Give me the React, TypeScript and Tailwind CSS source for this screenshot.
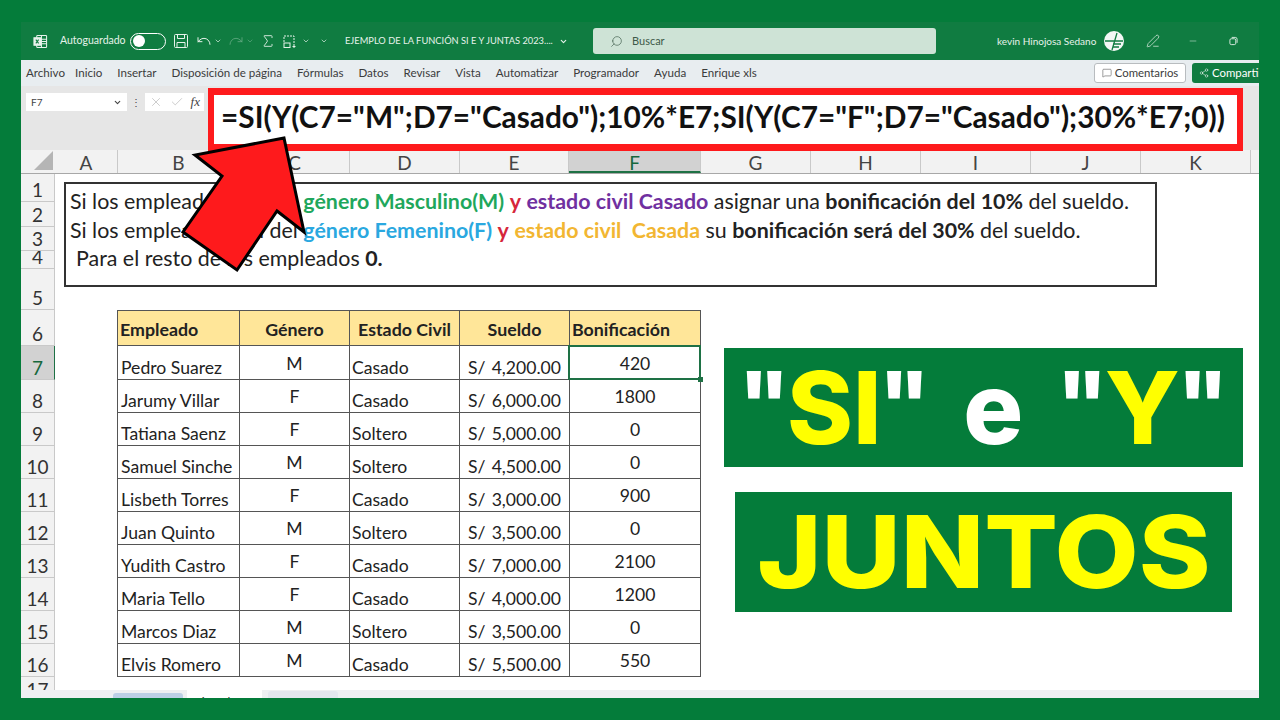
import { ChevronDown, MessageSquare, Minus, PenLine, Search, Share2, Sigma, Redo, Undo, X, Check } from "lucide-react";

const columns = [
  { label: "A", w: "w-[63px]" },
  { label: "B", w: "w-[122px]" },
  { label: "C", w: "w-[110px]" },
  { label: "D", w: "w-[110px]" },
  { label: "E", w: "w-[109px]" },
  { label: "F", w: "w-[132px]", active: true },
  { label: "G", w: "w-[110px]" },
  { label: "H", w: "w-[110px]" },
  { label: "I", w: "w-[110px]" },
  { label: "J", w: "w-[110px]" },
  { label: "K", w: "w-[110px]" },
];

const tabs = ["Inicio", "Insertar", "Disposición de página", "Fórmulas", "Datos", "Revisar", "Vista", "Automatizar", "Programador", "Ayuda", "Enrique xls"];

const empleados = [
  ["Pedro Suarez", "M", "Casado", "4,200.00", "420"],
  ["Jarumy Villar", "F", "Casado", "6,000.00", "1800"],
  ["Tatiana Saenz", "F", "Soltero", "5,000.00", "0"],
  ["Samuel Sinche", "M", "Soltero", "4,500.00", "0"],
  ["Lisbeth Torres", "F", "Casado", "3,000.00", "900"],
  ["Juan Quinto", "M", "Soltero", "3,500.00", "0"],
  ["Yudith Castro", "F", "Casado", "7,000.00", "2100"],
  ["Maria Tello", "F", "Casado", "4,000.00", "1200"],
  ["Marcos Diaz", "M", "Soltero", "3,500.00", "0"],
  ["Elvis Romero", "M", "Casado", "5,500.00", "550"],
];

const font = "font-['Lato','Open_Sans',sans-serif]";

function RowNumber({ n, h, active }: { n: number; h: string; active?: boolean }) {
  return (
    <div className={`${h} w-[34px] shrink-0 flex items-end justify-center overflow-hidden border-b border-r border-[#c9c9c9] pb-[2px] text-[19px] leading-none ${active ? "bg-[#d2d2d2] text-[#16683c] border-r-[#1e7145]" : "bg-[#f2f2f2] text-[#333]"}`}>
      {n}
    </div>
  );
}

function Arrow() {
  return (
    <svg className="absolute left-[160px] top-[112px]" width="130" height="142" viewBox="0 0 130 142">
      <path d="M103 4 L14 21 L41 42 L2 98 L56 136 L96 77 L123 98 Z" fill="#fe1a1c" stroke="#000" strokeWidth="3" strokeLinejoin="miter" />
    </svg>
  );
}

function ExcelLogo() {
  return (
    <svg width="15" height="15" viewBox="0 0 16 16" fill="none" stroke="#e8f2ec" strokeWidth="1.1">
      <rect x="4" y="1.5" width="10.5" height="13" rx="0.8" />
      <path d="M9 1.5v13M9 5.5h5.5M9 8h5.5M9 10.5h5.5" />
      <rect x="1" y="4" width="7" height="8" fill="#e8f2ec" />
      <path d="M3 6l3 4M6 6l-3 4" stroke="#107c41" />
    </svg>
  );
}

function SaveIcon() {
  return (
    <svg width="14" height="14" viewBox="0 0 14 14" fill="none" stroke="#e6f2ea" strokeWidth="1" className="ml-[8px]">
      <rect x="0.5" y="0.5" width="13" height="13" rx="1" />
      <path d="M3.5 0.5v4h7v-4M3 13.5v-5h8v5" />
    </svg>
  );
}

function Quote() {
  return <span className="-mx-[3px] inline-block -translate-y-[5px] text-[88px] text-white">"</span>;
}

export default function App() {
  return (
    <div className={`h-[720px] w-[1280px] overflow-hidden bg-[#047c3a] pl-[21px] pr-[21px] pt-[22px] ${font}`}>
      <div className="relative flex h-[676px] w-[1238px] flex-col overflow-hidden bg-white">
        {/* title bar */}
        <div className="flex h-[38px] shrink-0 items-center bg-[#107c41] text-[#e6f2ea]">
          <div className="ml-[12px]"><ExcelLogo /></div>
          <span className="ml-[12px] w-[65px] whitespace-nowrap text-[10.5px]">Autoguardado</span>
          <div className="ml-[5px] flex h-[17px] w-[36px] items-center rounded-full border border-white px-[2px]">
            <div className="h-[12px] w-[12px] rounded-full bg-white" />
          </div>
          <SaveIcon />
          <Undo size={16} strokeWidth={1.5} className="ml-[8px]" />
          <ChevronDown size={8} className="ml-[2px]" />
          <Redo size={16} strokeWidth={1.2} className="ml-[6px] opacity-40" />
          <ChevronDown size={8} className="ml-[2px] opacity-40" />
          <Sigma size={16} strokeWidth={1.3} className="ml-[6px]" />
          <svg width="15" height="15" viewBox="0 0 15 15" fill="none" stroke="#e6f2ea" strokeWidth="1" className="ml-[6px]">
            <path d="M2 8V2h10v9" strokeDasharray="2 1" />
            <rect x="2" y="9" width="6" height="4.5" />
            <path d="M12 11v3M10.5 12.5h3" />
          </svg>
          <ChevronDown size={8} className="ml-[5px]" />
          <ChevronDown size={8} className="ml-[10px]" />
          <span className="ml-[17px] w-[212px] whitespace-nowrap text-[9.3px]">EJEMPLO DE LA FUNCIÓN SI E Y JUNTAS 2023....</span>
          <ChevronDown size={9} strokeWidth={3} className="ml-[2px]" />
          <div className="ml-[25px] flex h-[26px] w-[343px] shrink-0 items-center rounded-[3px] bg-[#cee3d6] pl-[17px] text-[#3d5a49]">
            <Search size={13} strokeWidth={1.2} className="-scale-x-100" />
            <span className="ml-[9px] text-[11px]">Buscar</span>
          </div>
          <span className="ml-[61px] w-[101px] whitespace-nowrap text-[10px]">kevin Hinojosa Sedano</span>
          <svg width="20" height="20" viewBox="0 0 20 20" className="ml-[6px] shrink-0">
            <circle cx="10" cy="10" r="10" fill="#f3f7f5" />
            <path d="M1 10h18M13 2L8 19M9 13h8M9 16h6" stroke="#107c41" strokeWidth="1.3" />
          </svg>
          <PenLine size={14} strokeWidth={1.2} className="ml-[22px] shrink-0" />
          <Minus size={10} strokeWidth={1.2} className="ml-[28px] shrink-0" />
          <svg width="9" height="10" viewBox="0 0 10 10" fill="none" stroke="#e6f2ea" className="ml-[31px] shrink-0">
            <rect x="1" y="2.5" width="6.5" height="6.5" rx="1.5" />
            <path d="M3 1h4a2 2 0 0 1 2 2v4" />
          </svg>
        </div>

        {/* ribbon tabs */}
        <div className="flex h-[26px] shrink-0 items-center bg-[#e8edf0] pl-[5px] text-[11.6px] text-[#3c3c3c]">
          <span className="w-[49px]">Archivo</span>
          <div className="flex gap-[15px] whitespace-nowrap">
            {tabs.map((t) => (
              <span key={t}>{t}</span>
            ))}
          </div>
          <div className="ml-auto flex items-center gap-[6px] whitespace-nowrap">
            <div className="flex h-[20px] w-[92px] items-center justify-center gap-[3px] rounded-[3px] border border-[#b8bcbf] bg-white text-[11.4px]">
              <MessageSquare size={10} strokeWidth={1.2} />
              Comentarios
            </div>
            <div className="flex h-[20px] w-[67px] items-center gap-[3px] overflow-hidden rounded-l-[3px] bg-[#107c41] pl-[7px] text-[11.4px] text-white">
              <Share2 size={10} strokeWidth={1.2} className="shrink-0" />
              Compartir
            </div>
          </div>
        </div>

        {/* formula bar */}
        <div className="flex h-[64px] shrink-0 items-start bg-[#e6e6e6] pl-[5px] pt-[7px] text-[#444]">
          <div className="flex h-[18px] w-[101px] items-center justify-between bg-white px-[5px] text-[10px]">
            F7
            <ChevronDown size={9} strokeWidth={3} />
          </div>
          <span className="ml-[4px] text-[10px] leading-[18px]">⋮</span>
          <div className="ml-[4px] flex h-[18px] w-[59px] items-center justify-between bg-white px-[4px] text-[#a8a8a8]">
            <X size={14} strokeWidth={1} />
            <Check size={14} strokeWidth={1} />
            <span className="font-['Liberation_Serif',serif] text-[13px] italic text-[#444]">fx</span>
          </div>
        </div>

        {/* column headers */}
        <div className="flex h-[24px] shrink-0 border-b border-[#a8a8a8] bg-[#f2f2f2] text-[19px] leading-[25px] text-[#444]">
          <div className="flex h-full w-[34px] shrink-0 items-end justify-end bg-[#f2f2f2] pb-[3px] pr-[2px]">
            <div className="h-0 w-0 border-b-[19px] border-l-[19px] border-b-[#b5b5b5] border-l-transparent" />
          </div>
          {columns.map((c) => (
            <div key={c.label} className={`${c.w} shrink-0 border-r border-[#c9c9c9] text-center ${c.active ? "border-b-2 border-b-[#1e7145] bg-[#d2d2d2] text-[#16683c]" : ""}`}>
              {c.label}
            </div>
          ))}
        </div>

        {/* sheet */}
        <div className="flex flex-col text-[#222]">
          <div className="flex"><RowNumber n={1} h="h-[28px]" /></div>
          <div className="flex"><RowNumber n={2} h="h-[25px]" /></div>
          <div className="flex"><RowNumber n={3} h="h-[24px]" /></div>
          <div className="flex"><RowNumber n={4} h="h-[18px]" /></div>
          <div className="flex"><RowNumber n={5} h="h-[41px]" /></div>
          <div className="flex">
            <RowNumber n={6} h="h-[36px]" />
            <div className="ml-[62px] flex h-[36px] border-x border-t border-b border-[#555] bg-[#ffe699] text-[17.8px] font-bold leading-[36px] text-[#222]">
              <div className="w-[121px] pl-[2px]">Empleado</div>
              <div className="w-[110px] border-l border-[#555] text-center">Género</div>
              <div className="w-[110px] border-l border-[#555] text-center">Estado Civil</div>
              <div className="w-[110px] border-l border-[#555] text-center">Sueldo</div>
              <div className="w-[131px] border-l border-[#555] pl-[2px]">Bonificación</div>
            </div>
          </div>
          {empleados.map((e, i) => (
            <div key={e[0]} className="flex">
              <RowNumber n={i + 7} h={i === 0 ? "h-[34px]" : "h-[33px]"} active={i === 0} />
              <div className={`ml-[62px] flex border-x border-b border-[#555] text-[17.6px] leading-[22px] ${i === 0 ? "h-[34px]" : "h-[33px]"}`}>
                <div className="flex w-[121px] items-end pl-[3px]">{e[0]}</div>
                <div className="flex w-[110px] items-end justify-center border-l border-[#555] pb-[4px]">{e[1]}</div>
                <div className="flex w-[110px] items-end border-l border-[#555] pl-[2px]">{e[2]}</div>
                <div className="flex w-[110px] items-end justify-between border-l border-[#555] pl-[8px] pr-[8px]">
                  <span>S/</span>
                  <span>{e[3]}</span>
                </div>
                <div className={`relative flex w-[131px] items-end justify-center border-l border-[#555] pb-[4px] ${i === 0 ? "outline-2 -outline-offset-1 outline-[#1e7145]" : ""}`}>
                  {e[4]}
                  {i === 0 && <span className="absolute -bottom-[3px] -right-[3px] h-[5px] w-[5px] bg-[#1e7145]" />}
                </div>
              </div>
            </div>
          ))}
          <div className="flex">
            <div className="flex h-[13px] w-[34px] shrink-0 justify-center overflow-hidden border-r border-[#c9c9c9] bg-[#f2f2f2] pt-[3px] text-[19px] leading-none text-[#333]">17</div>
          </div>
        </div>

        {/* sheet tabs */}
        <div className="absolute bottom-0 left-0 flex h-[8px] w-full items-start overflow-hidden bg-[#eef0f2] pl-[92px] text-[12px] leading-[14px] text-[#333]">
          <div className="mt-[3px] h-full w-[70px] rounded-t-[3px] bg-[#bcd0e6]" />
          <div className="ml-[4px] h-full w-[75px] bg-white pt-[5px] text-center">Ejemplo 02</div>
          <div className="ml-[6px] mt-[1px] h-full w-[70px] rounded-t-[3px] bg-[#e3e7ee]" />
        </div>

        {/* text box over the sheet */}
        <div className="absolute left-[43px] top-[160px] h-[105px] w-[1093px] border-2 border-[#333] bg-white pl-[4px] pt-[3px] text-[21.4px] leading-[28.5px] text-[#222] whitespace-nowrap">
          <div>
            Si los empleados son del{" "}
            <b className="text-[#1fa75c]">género Masculino(M)</b> <b className="text-[#d6263b]">y</b>{" "}
            <b className="text-[#7030a0]">estado civil Casado</b> asignar una <b>bonificación del 10%</b> del sueldo.
          </div>
          <div>
            Si los empleados son del <b className="text-[#2aa8e0]">género Femenino(F)</b> <b className="text-[#d6263b]">y</b>{" "}
            <b className="text-[#f2b632]">estado civil&nbsp; Casada</b> su <b>bonificación será del 30%</b> del sueldo.
          </div>
          <div className="pl-[6px]">
            Para el resto de los empleados <b>0.</b>
          </div>
        </div>

        {/* formula callout */}
        <div className="absolute left-[187px] top-[66px] flex h-[63px] w-[1035px] items-center border-x-[6px] border-y-[7px] border-[#fe1a1c] bg-white pb-[4px] pl-[7px] text-[29.8px] font-bold whitespace-nowrap text-[#111]">
          =SI(Y(C7="M";D7="Casado");10%*E7;SI(Y(C7="F";D7="Casado");30%*E7;0))
        </div>

        <Arrow />

        {/* title banners */}
        <div className="absolute left-[703px] top-[326px] flex h-[119px] w-[519px] items-center justify-center gap-[36px] bg-[#047c3a] font-['Inter',sans-serif] text-[100px] leading-none font-extrabold whitespace-nowrap text-white">
          <span className="flex items-center"><Quote /><span className="text-[#ffff00]">SI</span><Quote /></span>
          <span>e</span>
          <span className="flex items-center"><Quote /><span className="text-[#ffff00]">Y</span><Quote /></span>
        </div>
        <div className="absolute left-[714px] top-[470px] flex h-[120px] w-[497px] items-center justify-center bg-[#047c3a] font-['Inter',sans-serif] text-[100px] leading-none font-extrabold whitespace-nowrap text-[#ffff00]">
          <span className="inline-block scale-x-[1.09]">JUNTOS</span>
        </div>
      </div>
    </div>
  );
}
